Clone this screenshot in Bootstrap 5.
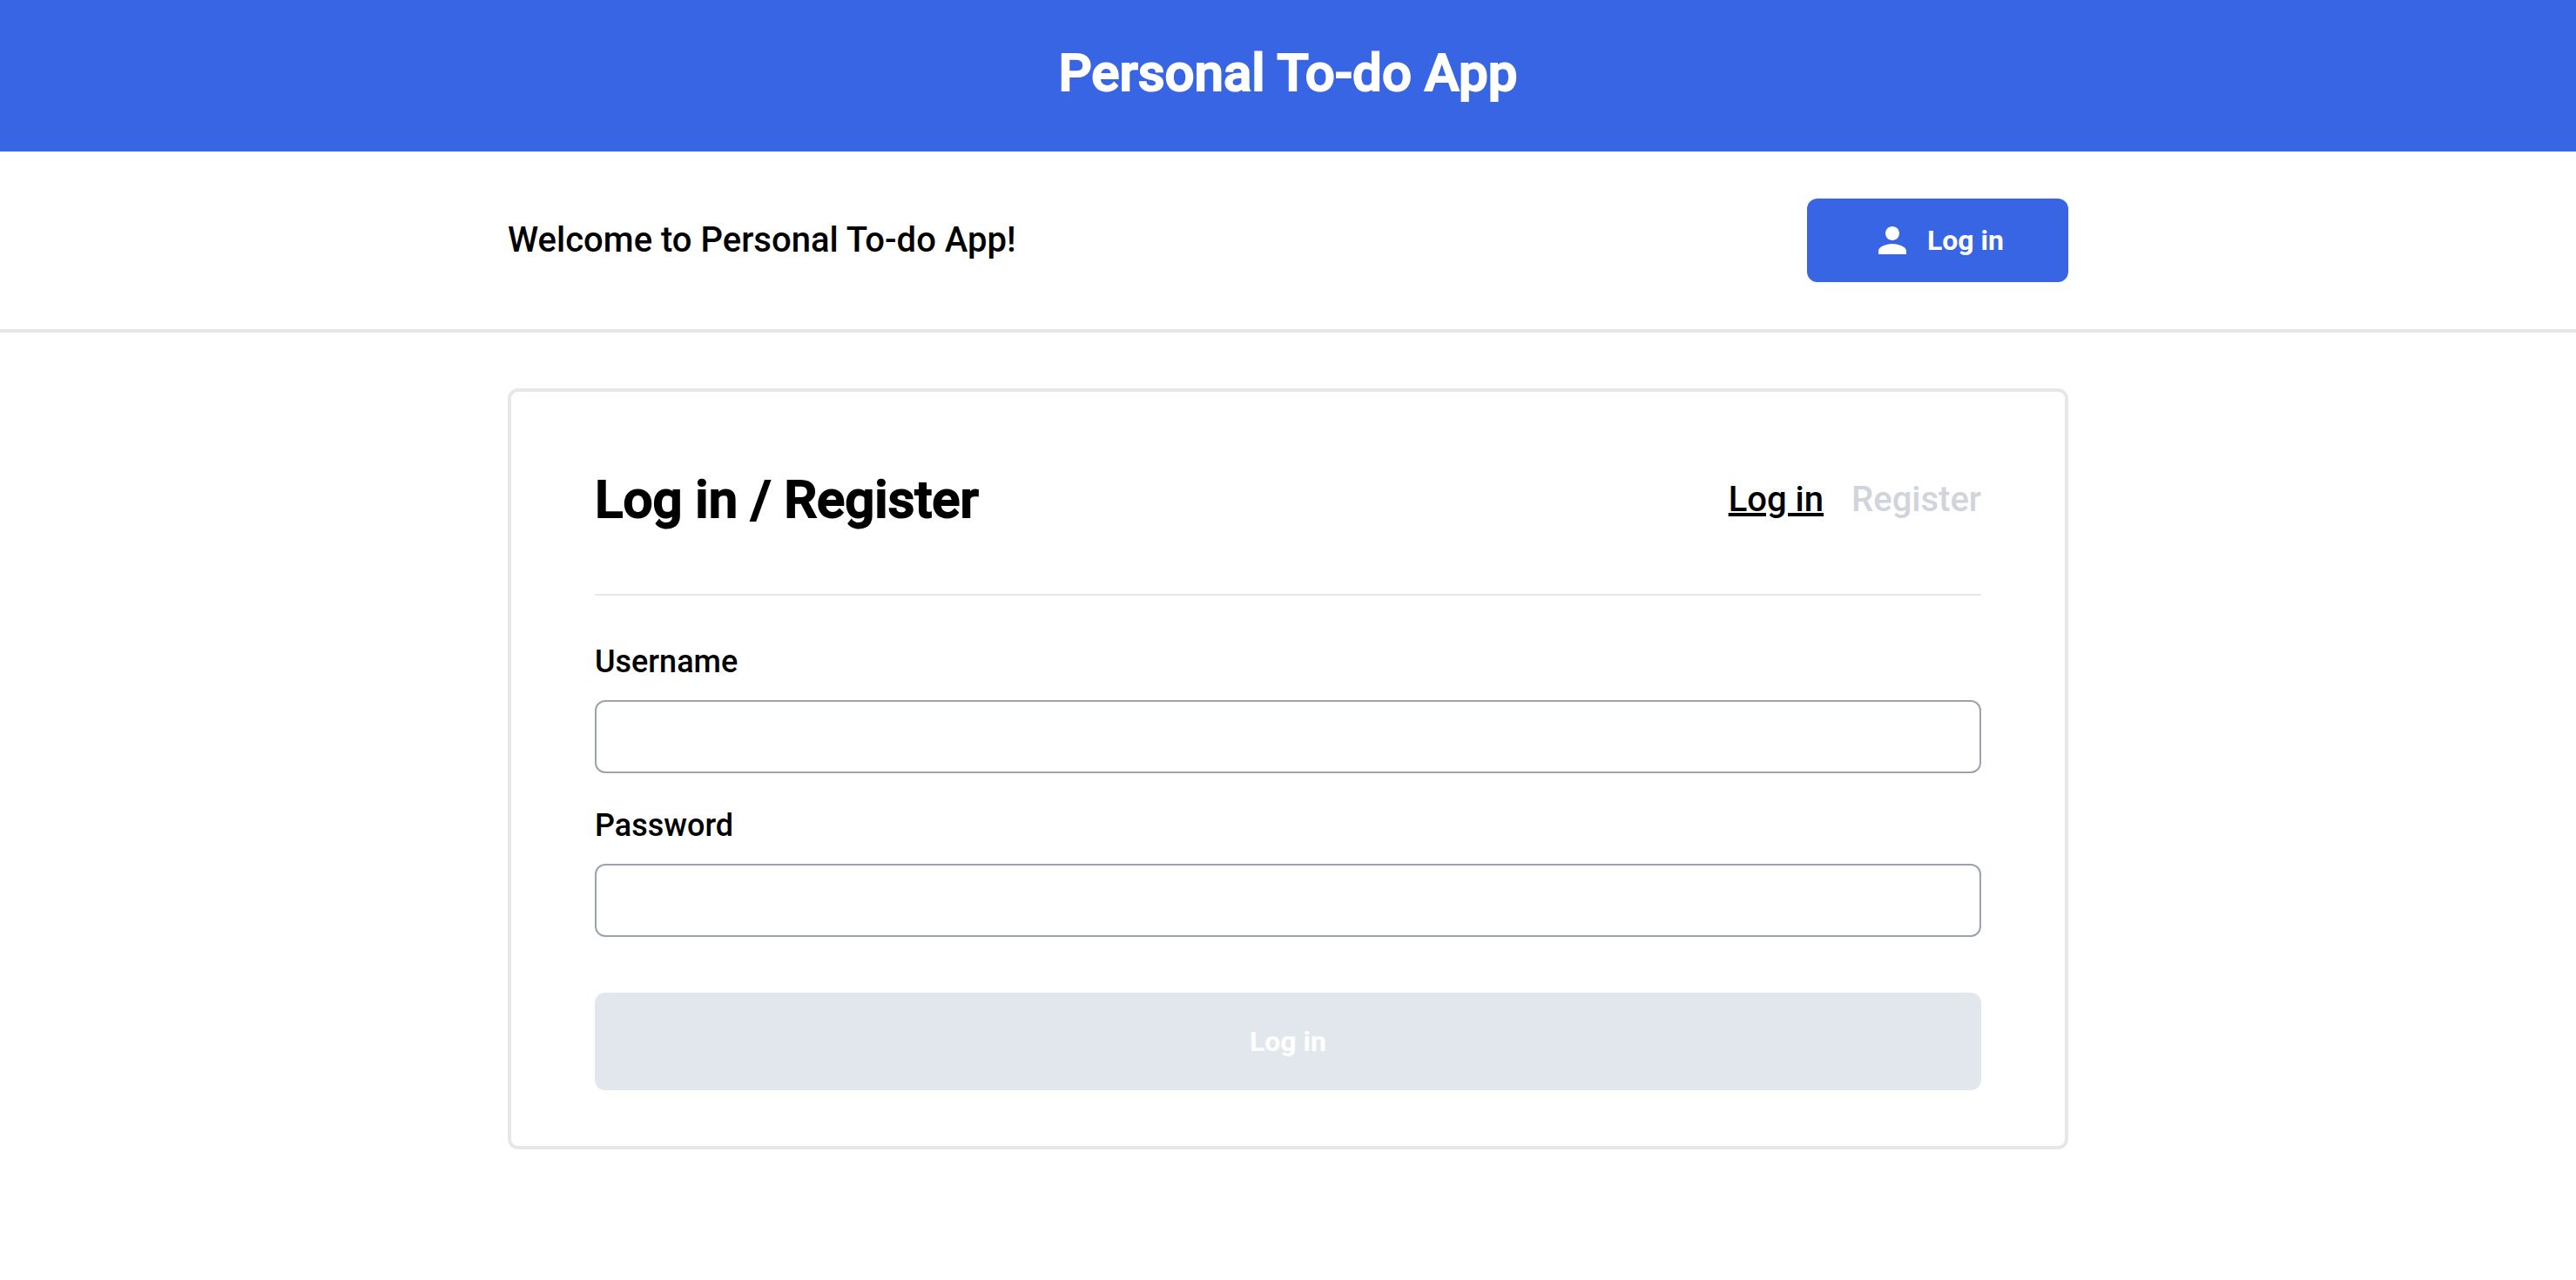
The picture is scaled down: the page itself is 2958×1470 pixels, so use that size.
<!DOCTYPE html>
<html lang="en">
<head>
<meta charset="utf-8">
<meta name="viewport" content="width=device-width, initial-scale=1">
<title>Personal To-do App</title>
<link href="https://cdn.jsdelivr.net/npm/bootstrap@5.3.0/dist/css/bootstrap.min.css" rel="stylesheet">
<style>
  body { font-family: Roboto, "Liberation Sans", sans-serif; color: #000; background: #fff; }
  .app-header { background: #3765e3; padding: 48px 24px 54px; }
  .app-title, .panel-title { font-size: 60px; line-height: 72px; font-weight: 500; -webkit-text-stroke: 2px currentColor; }
  .app-width { max-width: 1792px; }
  .welcome-bar { border-bottom: 4px solid #e5e7eb; padding: 54px 0; }
  .welcome-text, .tab-link { font-size: 40px; line-height: 56px; font-weight: 500; }
  .action-btn {
    --bs-btn-color: #fff; --bs-btn-bg: #3765e3;
    --bs-btn-hover-color: #fff; --bs-btn-hover-bg: #2b55cc;
    --bs-btn-disabled-color: #fff; --bs-btn-disabled-bg: #e2e7ee; --bs-btn-disabled-opacity: 1;
    --bs-btn-border-width: 0; --bs-btn-border-radius: 12px;
    --bs-btn-padding-x: 74px; --bs-btn-padding-y: 24px;
    --bs-btn-font-size: 32px; --bs-btn-line-height: 48px; --bs-btn-font-weight: 700;
  }
  .submit-btn { --bs-btn-padding-y: 32px; margin-top: 64px; }
  .person-icon { width: 48px; height: 48px; }
  .panel { border: 4px solid #e5e7eb; border-radius: 12px; margin: 64px auto; padding: 64px 96px; }
  .panel-head { border-bottom: 2px solid #e5e7eb; padding: 24px 0 72px; margin-bottom: 48px; }
  .tab-list { gap: 32px; }
  .tab-link { color: #d1d5db; text-decoration: none; }
  .tab-link.active { color: #000; text-decoration: underline; text-decoration-thickness: 4px; }
  .field-label { font-size: 36px; line-height: 56px; font-weight: 500; margin-bottom: 16px; }
  .field-input { height: 84px; font-size: 36px; border: 2px solid #9ca3af; border-radius: 12px; padding: 12px 24px; }
  .field + .field { margin-top: 32px; }
</style>
<script src="https://cdn.jsdelivr.net/npm/bootstrap@5.3.0/dist/js/bootstrap.bundle.min.js"></script>
</head>
<body>
<header class="app-header text-center">
  <h1 class="app-title text-white mb-0">Personal To-do App</h1>
</header>
<div class="welcome-bar">
  <div class="app-width mx-auto d-flex justify-content-between align-items-center">
    <p class="welcome-text mb-0">Welcome to Personal To-do App!</p>
    <button type="button" class="btn action-btn d-flex align-items-center gap-3">
      <svg class="person-icon" viewBox="0 0 24 24" fill="currentColor" aria-hidden="true"><path d="M12 12c2.21 0 4-1.79 4-4s-1.79-4-4-4-4 1.790-4 4 1.790 4 4 4zm0 2c-2.670 0-8 1.340-8 4v2h16v-2c0-2.660-5.330-4-8-4z"/></svg>
      Log in
    </button>
  </div>
</div>
<main class="app-width panel">
  <div class="panel-head d-flex justify-content-between align-items-center">
    <h2 class="panel-title mb-0">Log in / Register</h2>
    <nav class="tab-list d-flex" aria-label="Account form">
      <a class="tab-link active" href="#login" aria-current="page">Log in</a>
      <a class="tab-link" href="#register">Register</a>
    </nav>
  </div>
  <form>
    <div class="field">
      <label class="field-label d-block" for="username">Username</label>
      <input class="form-control field-input" type="text" id="username" autocomplete="username">
    </div>
    <div class="field">
      <label class="field-label d-block" for="password">Password</label>
      <input class="form-control field-input" type="password" id="password" autocomplete="current-password">
    </div>
    <button type="submit" class="btn action-btn submit-btn w-100" disabled>Log in</button>
  </form>
</main>
</body>
</html>
